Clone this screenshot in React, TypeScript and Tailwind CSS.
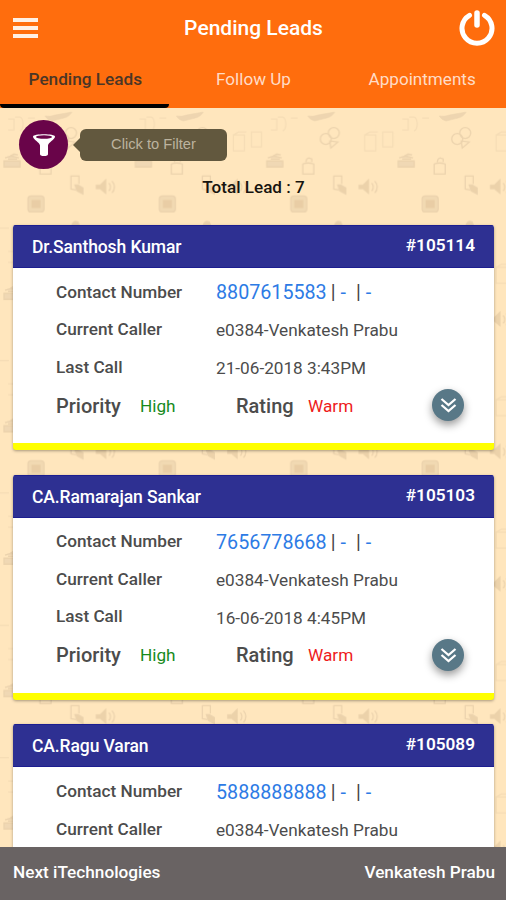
import React, { useState } from 'react';

interface Lead {
  id: string;
  name: string;
  phone: string;
  caller: string;
  lastCall?: string;
  priority?: string;
  rating?: string;
}

const leads: Lead[] = [
  {
    id: '105114',
    name: 'Dr.Santhosh Kumar',
    phone: '8807615583',
    caller: 'e0384-Venkatesh Prabu',
    lastCall: '21-06-2018 3:43PM',
    priority: 'High',
    rating: 'Warm',
  },
  {
    id: '105103',
    name: 'CA.Ramarajan Sankar',
    phone: '7656778668',
    caller: 'e0384-Venkatesh Prabu',
    lastCall: '16-06-2018 4:45PM',
    priority: 'High',
    rating: 'Warm',
  },
  {
    id: '105089',
    name: 'CA.Ragu Varan',
    phone: '5888888888',
    caller: 'e0384-Venkatesh Prabu',
  },
];

const tabs = ['Pending Leads', 'Follow Up', 'Appointments'];

// Repeating office doodles behind the list
const Doodles: React.FC = () => (
  <svg className="absolute inset-0 h-full w-full" aria-hidden="true">
    <defs>
      <pattern id="doodles" width="131.4" height="132.4" patternUnits="userSpaceOnUse">
        <g fill="none" stroke="#dfc6a2" strokeWidth="1.3" opacity="0.6">
          <g opacity="0.5">
            <path d="M8 11h6v11H8M15 9h5c4 2 4 12 0 14M28 10h7M0 120h9" />
            <path d="M102 27l5-3h8M102 27h11v16h-11zM120 24h10v15h-10z" />
          </g>
          <path d="M45 8q5 1 10-1l17-3q-3 5-8 6l-12 3q-5-1-7-5z" fill="#e2c9a6" strokeWidth="0.5" />
          <circle cx="63" cy="31" r="5.5" />
          <circle cx="71" cy="25" r="5.500" />
          <path d="M67 33l8 1-7 6z" />
          <path d="M4 53h16v6H4zM5 50l6-2 8 2M10 48l4-2 4 1M8 51h9" fill="#e6cfad" />
          <path d="M40 56q5-2 11 0v10H40zM43 54l1-3 2-1 3 1v3" />
          <path d="M76 82l-5-1V68h8v8" />
          <path d="M75 77l2 6 6 3v-6l-5-3z" fill="#dfc49c" />
          <path d="M96 77h4l6-6v15l-6-5h-4z" fill="#dfc49c" strokeWidth="0.6" />
          <path d="M109 75q3 4 0 8M112 73q5 6 0 12" />
          <rect x="28" y="88" width="16" height="16" rx="3" fill="#e8d0aa" />
          <rect x="31.500" y="92" width="9" height="8" fill="#dabd94" stroke="none" />
          <path d="M72 117q1-5 6-3l1 3z" fill="#dfc49c" />
          <path d="M25 118h-8" opacity="0.5" />
        </g>
      </pattern>
    </defs>
    <rect width="100%" height="100%" fill="url(#doodles)" />
  </svg>
);

const LeadCard: React.FC<{ lead: Lead }> = ({ lead }) => (
  <article className="h-[225px] shrink-0 overflow-hidden rounded-[3px] border-b-[7px] border-[#ffff00] bg-white text-[#4c4c4c] shadow-[0_1px_3px_rgba(0,0,0,0.35)]">
    <header className="flex h-[43px] items-center justify-between border-y border-[#1d1e90] bg-[#2e3092] pr-[19px] pl-[19px] text-[17.500px] font-medium text-white">
      <h2 className="pt-px tracking-[-0.1px]">{lead.name}</h2>
      <span className="-mt-px text-[17.200px] font-semibold">#{lead.id}</span>
    </header>
    <div className="relative pt-[5px] pl-[43px]">
      <dl className="grid grid-cols-[160px_1fr] auto-rows-[37.500px] items-center text-[17.200px] leading-5">
        <dt className="font-medium">Contact Number</dt>
        <dd className="flex pt-[3px] text-[19.700px] text-[#2d7be5]">
          <a href={`tel:${lead.phone}`}>{lead.phone}</a>
          <span className="ml-1 text-[#444]">|</span>
          <span className="ml-[5px]">-</span>
          <span className="ml-2.5 text-[#444]">|</span>
          <span className="ml-[5px]">-</span>
        </dd>
        <dt className="font-medium">Current Caller</dt>
        <dd className="pt-0.5">{lead.caller}</dd>
        {lead.lastCall && (
          <>
            <dt className="font-medium">Last Call</dt>
            <dd className="pt-[3px]">{lead.lastCall}</dd>
          </>
        )}
      </dl>
      {lead.priority && (
        <div className="flex h-[40px] items-center text-[17.200px]">
          <span className="w-[84px] text-[20px] font-medium">Priority</span>
          <span className="w-[96px] pt-0.5 text-[#168a1c]">{lead.priority}</span>
          <span className="w-[72px] text-[20px] font-medium">Rating</span>
          <span className="pt-0.5 text-[#ee1b1b]">{lead.rating}</span>
        </div>
      )}
      <button
        aria-label="More details"
        className="absolute top-[121px] right-[30px] flex size-8 items-center justify-center rounded-full bg-[#587887] shadow-[0_4px_9px_rgba(0,0,0,0.4)]"
      >
        <svg width="18" height="18" viewBox="0 0 18 18" fill="none" stroke="white" strokeWidth="2.300">
          <path d="M2.500 3L9.500 9l7-6M2.500 9l7 6 7-6" />
        </svg>
      </button>
    </div>
  </article>
);

export default function App() {
  const [activeTab, setActiveTab] = useState(0);

  return (
    <div className="flex h-[900px] w-full flex-col overflow-hidden bg-[#ffe6bd] font-['Roboto',sans-serif]">
      <header className="h-[108px] shrink-0 bg-[#ff6d0d] text-white">
        <div className="flex h-14 items-center justify-between pr-[11px] pl-[13px]">
          <button aria-label="Menu" className="flex w-[25px] flex-col gap-1">
            <span className="h-[4px] bg-[#fff0e5]" />
            <span className="h-[4px] bg-[#fff0e5]" />
            <span className="h-[4px] bg-[#fff0e5]" />
          </button>
          <h1 className="ml-[10px] pt-px text-[21px] font-medium">Pending Leads</h1>
          <button aria-label="Log out">
            <svg width="36" height="36" viewBox="0 0 36 36" fill="none" stroke="white" strokeLinecap="round">
              <path d="M10.500 5.300a15 15 0 1 0 15 0" strokeWidth="5" />
              <path d="M18 2.900v12" strokeWidth="5.500" />
            </svg>
          </button>
        </div>
        <nav className="grid h-[52px] grid-cols-3">
          {tabs.map((tab, i) => (
            <button
              key={tab}
              onClick={() => setActiveTab(i)}
              className={
                i === activeTab
                  ? 'rounded-b-sm border-b-4 border-black pl-0.5 text-[17.200px] font-medium text-[#4a3626]'
                  : 'pb-[4px] pl-px text-[17.100px] text-[#ffdcc6]'
              }
            >
              {tab}
            </button>
          ))}
        </nav>
      </header>

      <main className="relative min-h-0 flex-1 overflow-hidden">
        <Doodles />
        <div className="relative">
          <div className="flex h-[68px] items-center pt-[5px] pl-[19px]">
            <button aria-label="Filter" className="flex size-[49px] items-center justify-center rounded-full bg-[#690449]">
              <svg width="24" height="24" viewBox="0 0 24 24" fill="white">
                <path d="M1 3.500C1 .5 23 .5 23 3.500c0 3-7 6-7 9V21q0 2-4 2t-4-2v-8.500c0-3-7-6-7-9z" />
                <ellipse cx="12" cy="4" rx="8" ry="1.700" fill="#690449" />
              </svg>
            </button>
            <span className="ml-[5px] border-y-[7px] border-r-[7px] border-y-transparent border-r-[#62583e]" />
            <span className="flex h-8 w-[147px] items-center justify-center rounded-md bg-[#62583e] font-['Liberation_Sans',sans-serif] text-[14.700px] text-[#bcb39e]">
              Click to Filter
            </span>
          </div>
          <p className="h-[49px] -translate-y-px pl-px text-center text-[17.100px] font-medium text-[#17140f]">
            Total Lead : 7
          </p>
          <div className="flex flex-col gap-[24.700px] px-3 pl-[13px]">
            {leads.map((lead) => (
              <LeadCard key={lead.id} lead={lead} />
            ))}
          </div>
        </div>
      </main>

      <footer className="flex h-[53px] shrink-0 items-center justify-between bg-[#696363] pr-[11px] pb-0.5 pl-[13px] text-[17.200px] font-medium text-white">
        <span>Next iTechnologies</span>
        <span>Venkatesh Prabu</span>
      </footer>
    </div>
  );
}
